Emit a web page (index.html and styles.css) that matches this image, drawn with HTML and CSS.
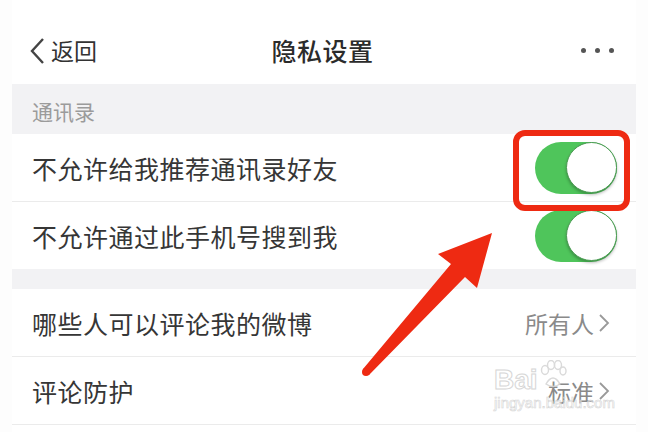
FILE: index.html
```html
<!DOCTYPE html>
<html lang="zh-CN">
<head>
    <meta charset="UTF-8">
    <meta name="viewport" content="width=device-width, initial-scale=1.0">
    <title>隐私设置</title>
    <link rel="stylesheet" href="styles.css">
</head>
<body>
    <div class="screen">
        <div class="nav">
            <div class="nav-back">
                <svg class="back-icon" width="16" height="28" viewBox="0 0 16 28">
                    <path d="M14 2 L3 14 L14 26" fill="none" stroke="#444" stroke-width="2.4"/>
                </svg>
                <span>返回</span>
            </div>
            <div class="nav-title">隐私设置</div>
            <div class="nav-more">
                <span class="dot"></span><span class="dot"></span><span class="dot"></span>
            </div>
        </div>

        <div class="section-title">通讯录</div>

        <div class="row">
            <span class="row-label">不允许给我推荐通讯录好友</span>
            <span class="switch on"><span class="knob"></span></span>
        </div>
        <div class="row last">
            <span class="row-label">不允许通过此手机号搜到我</span>
            <span class="switch on"><span class="knob"></span></span>
        </div>

        <div class="gap"></div>

        <div class="row">
            <span class="row-label">哪些人可以评论我的微博</span>
            <span class="row-value">所有人<svg class="chev" width="12" height="20" viewBox="0 0 12 20"><path d="M2 2 L10 10 L2 18" fill="none" stroke="#999" stroke-width="1.8"/></svg></span>
        </div>
        <div class="row">
            <span class="row-label">评论防护</span>
            <span class="row-value">标准<svg class="chev" width="12" height="20" viewBox="0 0 12 20"><path d="M2 2 L10 10 L2 18" fill="none" stroke="#999" stroke-width="1.8"/></svg></span>
        </div>
        <div class="row"></div>
    </div>

    <!-- baidu jingyan watermark -->
    <div class="watermark">
        <div class="wm-top">
            <span class="wm-bai">Bai</span>
            <svg class="wm-paw" width="28" height="30" viewBox="0 0 28 30">
                <g fill="none" stroke="#d6d6d6" stroke-width="1.4">
                    <ellipse cx="6" cy="10" rx="3.5" ry="4.5"/>
                    <ellipse cx="12" cy="5" rx="3.5" ry="4.5"/>
                    <ellipse cx="19" cy="5" rx="3.5" ry="4.5"/>
                    <ellipse cx="24" cy="11" rx="3" ry="4"/>
                    <path d="M7 24 Q14 12 21 24 Q14 29 7 24 Z"/>
                </g>
            </svg>
        </div>
        <div class="wm-url">jingyan.baidu.com</div>
    </div>

    <!-- red annotation -->
    <svg class="annotation" width="648" height="432" viewBox="0 0 648 432">
        <rect x="516" y="133" width="111" height="75" rx="9" fill="none" stroke="#ee2a12" stroke-width="6"/>
        <polygon fill="#ee2a12" points="492,233 477,288 465,277 369,375 363,369 451,264 438,254"/>
        <circle cx="366" cy="372" r="4" fill="#ee2a12"/>
    </svg>
</body>
</html>
```

FILE: styles.css
```css
body {
    margin: 0;
    padding: 0;
    background-color: #fdfdfd;
    font-family: "Noto Sans CJK SC", "Noto Sans", sans-serif;
    color: #333;
    overflow: hidden;
}

.screen {
    margin: 0 12px;
    height: 432px;
    overflow: hidden;
    background-color: #fff;
}

/* top bar */
.nav {
    height: 84px;
    box-sizing: border-box;
    padding: 16px 20px 0 17px;
    display: grid;
    grid-template-columns: 1fr auto 1fr;
    align-items: center;
}

.nav-back {
    display: flex;
    align-items: center;
    font-size: 23px;
    color: #333;
}

.back-icon {
    margin-right: 6px;
    margin-top: 2px;
}

.nav-title {
    font-size: 25px;
    font-weight: 500;
    letter-spacing: 0.5px;
    color: #2b2b2b;
}

.nav-more {
    display: flex;
    justify-content: flex-end;
    gap: 9px;
    padding-right: 2px;
}

.dot {
    width: 5px;
    height: 5px;
    border-radius: 50%;
    background-color: #555;
}

/* section header */
.section-title {
    height: 50px;
    box-sizing: border-box;
    padding: 4px 20px 0;
    display: flex;
    align-items: center;
    background-color: #f2f2f4;
    font-size: 21px;
    color: #9b9b9b;
}

.gap {
    height: 20px;
    background-color: #f2f2f4;
}

/* list rows */
.row {
    height: 68px;
    box-sizing: border-box;
    padding: 0 19px 0 20px;
    display: flex;
    align-items: center;
    justify-content: space-between;
    border-bottom: 1px solid #ebebeb;
}

.row.last {
    height: 67px;
    border-bottom: none;
}

.row-label {
    font-size: 25px;
    letter-spacing: 0.5px;
    color: #363636;
}

.row-value {
    display: flex;
    align-items: center;
    font-size: 23px;
    color: #8a8a8a;
    padding-right: 7px;
}

.chev {
    margin-left: 4px;
}

/* switch */
.switch {
    width: 82px;
    height: 52px;
    border-radius: 26px;
    box-sizing: border-box;
    background-color: #4fc55b;
    position: relative;
}

.switch .knob {
    position: absolute;
    right: 0;
    top: 0;
    width: 51px;
    height: 51px;
    box-sizing: border-box;
    border-radius: 50%;
    background-color: #fff;
    border: 1.5px solid #4a9a52;
    box-shadow: 0 2px 3px rgba(0, 0, 0, 0.25);
}

/* watermark overlay */
.watermark {
    position: absolute;
    left: 494px;
    top: 360px;
    opacity: 0.9;
}

.wm-top {
    display: flex;
    align-items: flex-end;
}

.wm-bai {
    font-family: "Liberation Sans", sans-serif;
    font-size: 28px;
    font-weight: bold;
    line-height: 28px;
    color: rgba(255, 255, 255, 0.6);
    -webkit-text-stroke: 1px #d2d2d2;
}

.wm-paw {
    margin-left: 1px;
    margin-bottom: 4px;
}

.wm-url {
    font-family: "Liberation Sans", sans-serif;
    font-size: 15px;
    line-height: 18px;
    color: rgba(255, 255, 255, 0.5);
    -webkit-text-stroke: 0.6px #d2d2d2;
}

.annotation {
    position: absolute;
    left: 0;
    top: 0;
    pointer-events: none;
}
```
